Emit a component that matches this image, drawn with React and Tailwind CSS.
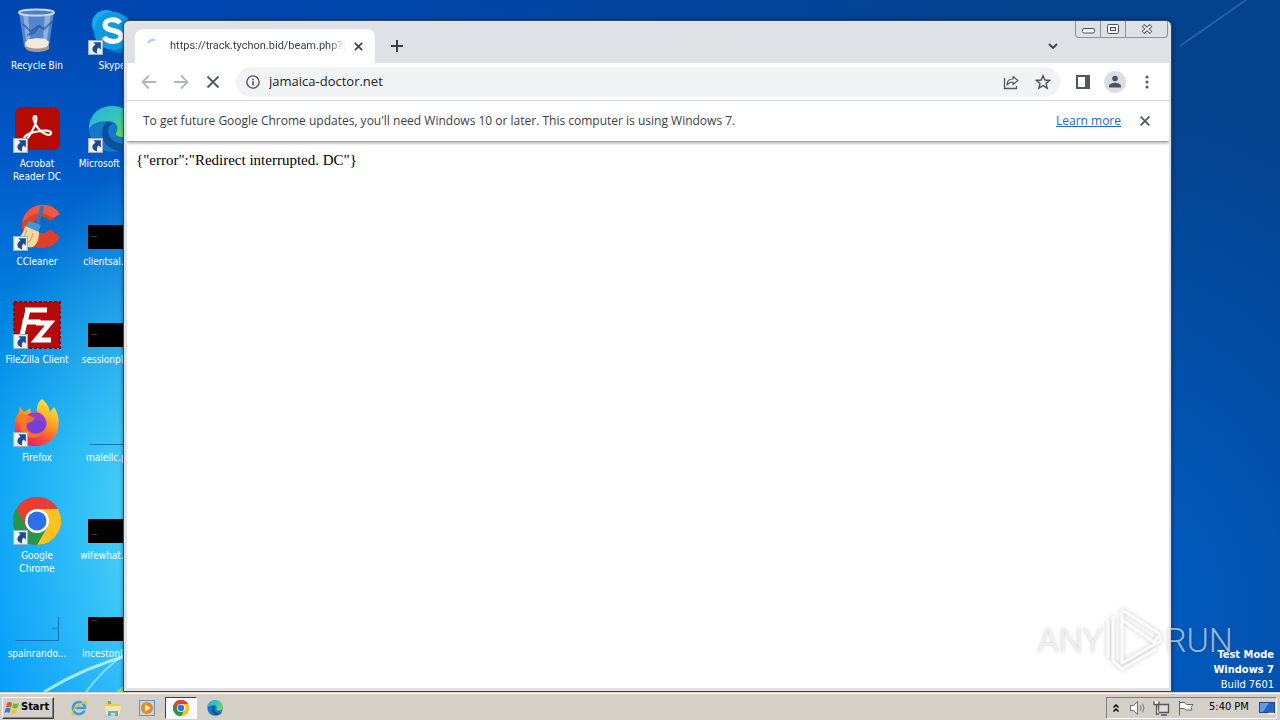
import { useState } from "react";

function ShortcutBadge() {
  return (
    <svg viewBox="0 0 14 14" className="absolute bottom-0 left-0 h-[15px] w-[15px]">
      <rect x="0.5" y="0.5" width="13" height="13" fill="#eef2f6" stroke="#a3b0bd" />
      <path d="M5 2h7v7L10 7C8.500 8 8 10 8.500 12.500 3.500 11.500 2.500 7 7 4.200z" fill="#1c4b8f" />
    </svg>
  );
}

function RecycleIcon() {
  return (
    <svg viewBox="0 0 48 48" className="h-12 w-12">
      <path d="M6 5l5 34c1 5 24 5 25 0l5-34z" fill="#6f99d6" fillOpacity="0.75" />
      <path d="M10 6l3 27h4L15 6zM32 6l-2 27h4L38 6z" fill="#d5e5f7" fillOpacity="0.45" />
      <path d="M10 17l8 8 7-6 6 3 8-7M14 28l7-2 6-8" fill="none" stroke="#1e4c9c" strokeWidth="2" strokeOpacity="0.6" />
      <path d="M12 36c3-6 7-3 11-5 5 1 9-1 13 4l-1 4c-3 5-21 5-23 0z" fill="#f0e9dc" />
      <path d="M12 37c1 6 23 6 24 0v5c-4 4-20 4-23 0z" fill="#a3978c" />
      <ellipse cx="23.500" cy="5.500" rx="17.500" ry="3" fill="#4e7fc4" stroke="#cdd8e2" strokeWidth="2" />
    </svg>
  );
}

function SkypeIcon() {
  return (
    <svg viewBox="0 0 48 48" className="h-12 w-12">
      <circle cx="18" cy="17" r="14" fill="#20a8e8" />
      <circle cx="31" cy="31" r="15" fill="#0a78c8" />
      <circle cx="25" cy="24" r="19" fill="#0d9ae0" />
      <path d="M32 16c-4-5-15-4-15 2 0 7 16 4 16 11 0 7-13 7-17 1" fill="none" stroke="#fff" strokeWidth="5" />
    </svg>
  );
}

function AcrobatIcon() {
  return (
    <svg viewBox="0 0 48 48" className="h-12 w-12">
      <rect x="2" y="2" width="45" height="43" rx="7" fill="#b30b00" />
      <path
        d="M13 34c-4 0-1-5 9-7 8-2 16-2 16 1 0 4-9 1-13-5-4-5-6-12-3-12s1 9-3 15c-2 4-4 8-6 8z"
        fill="none"
        stroke="#fff"
        strokeWidth="2.200"
      />
    </svg>
  );
}

function EdgeIcon({ className }) {
  return (
    <svg viewBox="0 0 48 48" className={className}>
      <defs>
        <linearGradient id="edgeTop" x1="0" y1="0" x2="1" y2="0.600">
          <stop offset="0" stopColor="#2faee0" />
          <stop offset="0.600" stopColor="#33c6b8" />
          <stop offset="1" stopColor="#6fdc4c" />
        </linearGradient>
      </defs>
      <circle cx="24" cy="24" r="23" fill="#1478c8" />
      <path d="M1 24C1 10 11 1 24 1c14 0 23 10 23 19 0 8-6 12-12 12-5 0-8-2-7-4 4-6 0-12-8-12C10 16 3 19 1 24z" fill="url(#edgeTop)" />
      <path d="M19 17c-9 7-6 26 12 29 6-1 11-5 14-9-12 5-25-1-25-11 0-4 2-6 4-7-1-2-3-2-5-2z" fill="#0c4f9c" />
    </svg>
  );
}

function CCleanerIcon() {
  return (
    <svg viewBox="0 0 48 48" className="h-12 w-12">
      <path d="M47 11C38-4 12-1 9 20c-2 26 27 34 38 14l-10-8c-6 8-17 4-16-5 1-8 11-10 16-3z" fill="#df3f2b" />
      <path d="M47 11C38-4 12-1 9 20c10-11 20-13 31-5z" fill="#f0654a" fillOpacity="0.7" />
      <path d="M29 5l-5 17" stroke="#2e78b8" strokeWidth="4" strokeLinecap="round" />
      <path d="M16 18l12 4-3 8-13-6z" fill="#3f97d8" />
      <path d="M12 23l14 6c0 8-2 12-6 15-8 1-15-2-20-7 7-2 11-7 12-14z" fill="#f3d9a0" />
      <path d="M14 27c-2 6-5 9-9 11M20 30c-1 6-4 9-7 12" stroke="#c79f5c" fill="none" />
    </svg>
  );
}

function FileZillaIcon() {
  return (
    <svg viewBox="0 0 48 48" className="h-12 w-12">
      <rect x="1" y="1" width="46" height="46" fill="#b50a0a" />
      <rect x="1" y="1" width="46" height="46" fill="none" stroke="#8d0505" strokeWidth="2" strokeDasharray="3 2" />
      <path d="M12 9h22M9.500 21h18M15 9L9 34" stroke="#fff" strokeWidth="5" fill="none" />
      <path d="M23 22h14L23 39h15" stroke="#fff" strokeWidth="5" fill="none" />
    </svg>
  );
}

function FirefoxIcon() {
  return (
    <svg viewBox="0 0 48 48" className="h-12 w-12">
      <defs>
        <linearGradient id="fox" x1="0.800" y1="0" x2="0.300" y2="1">
          <stop offset="0" stopColor="#fff04a" />
          <stop offset="0.450" stopColor="#ff9a1f" />
          <stop offset="0.750" stopColor="#ff4a3d" />
          <stop offset="1" stopColor="#e21a72" />
        </linearGradient>
      </defs>
      <path
        d="M29 0c5 4 7 8 8 13l4-5c5 7 6 17 3 25-7 17-31 19-40 4C0 30 1 19 6 13l1-5 4 5c2-1 4-2 6-4l1 5c2-1 4-1 6-1-1-5 1-10 5-13z"
        fill="url(#fox)"
      />
      <circle cx="23" cy="25" r="10" fill="#7440d8" />
      <path d="M14 16c6-4 14-4 18 3 2 4 2 6 1 9-2-4-5-6-9-6z" fill="#8d3fd6" />
      <path d="M5 17c5-3 10-1 17 2-1 4-6 4-8 6-3 7 6 13 15 8-5 10-24 8-24-16z" fill="#ff7a24" fillOpacity="0.8" />
    </svg>
  );
}

function ChromeIcon({ className }) {
  return (
    <svg viewBox="0 0 48 48" className={className}>
      <circle cx="24" cy="24" r="24" fill="#2b9547" />
      <path d="M24 24L3.200 12A24 24 0 0 1 44.800 12z" fill="#e63e32" />
      <path d="M24 12h20.800A24 24 0 0 1 24 48l10.400-18z" fill="#fcc220" />
      <path d="M3.200 12L13.600 30 24 24V12z" fill="#e63e32" />
      <path d="M3.200 12l10.400 18L24 36h6L24 48A24 24 0 0 1 3.200 12z" fill="#2b9547" />
      <circle cx="24" cy="24" r="12" fill="#fff" />
      <circle cx="24" cy="24" r="9.500" fill="#2f6fea" />
    </svg>
  );
}

function FileThumb({ dash }) {
  return (
    <span className="flex h-12 w-12 items-end pb-[2px]">
      <span className={`flex h-6 w-full bg-black pl-[3px] ${dash}`}>
        <span className="h-px w-[6px] bg-[#2c3f3d]" />
      </span>
    </span>
  );
}

function LineThumb() {
  return (
    <span className="flex h-12 w-12 items-end pb-[2px] pl-[2px]">
      <span className="h-px w-full bg-[#12779f]" />
    </span>
  );
}

function OutlineThumb() {
  return (
    <span className="flex h-12 w-12 items-end px-[2px] pb-[2px]">
      <span className="flex h-6 w-full items-center justify-end border-r border-b border-[#1272b4]">
        <span className="h-px w-[6px] bg-[#1272b4]" />
      </span>
    </span>
  );
}

const columns = [
  [
    { label: "Recycle Bin", icon: <RecycleIcon /> },
    { label: "Acrobat Reader DC", icon: <AcrobatIcon />, shortcut: true, wrap: true },
    { label: "CCleaner", icon: <CCleanerIcon />, shortcut: true },
    { label: "FileZilla Client", icon: <FileZillaIcon />, shortcut: true },
    { label: "Firefox", icon: <FirefoxIcon />, shortcut: true },
    { label: "Google Chrome", icon: <ChromeIcon className="h-12 w-12" />, shortcut: true, wrap: true },
    { label: "spainrando...", icon: <OutlineThumb /> },
  ],
  [
    { label: "Skype", icon: <SkypeIcon />, shortcut: true },
    { label: "Microsoft Edge", icon: <EdgeIcon className="h-12 w-12" />, shortcut: true },
    { label: "clientsal.png", icon: <FileThumb dash="pt-[11px]" /> },
    { label: "sessionplus...", icon: <FileThumb dash="pt-[11px]" /> },
    { label: "malellc.png", icon: <LineThumb /> },
    { label: "wifewhat.pn...", icon: <FileThumb dash="pt-[15px]" /> },
    { label: "incestonlkg...", icon: <FileThumb dash="pt-[3px]" /> },
  ],
];

function DesktopIcons() {
  return (
    <div className="flex gap-px">
      {columns.map((items, i) => (
        <div key={i} className="flex flex-col">
          {items.map((item) => (
            <button key={item.label} type="button" className="flex h-[98px] w-[74px] flex-col items-center gap-1 pt-[7px]">
              <span className="relative block h-12 w-12">
                {item.icon}
                {item.shortcut && <ShortcutBadge />}
              </span>
              <span
                className={
                  item.wrap
                    ? "px-2 text-center text-[10px] leading-[13px] text-white"
                    : "text-center text-[10px] leading-[13px] whitespace-nowrap text-white"
                }
              >
                {item.label}
              </span>
            </button>
          ))}
        </div>
      ))}
    </div>
  );
}

function Wallpaper() {
  return (
    <svg viewBox="0 0 1280 692" preserveAspectRatio="none" className="absolute inset-0 h-full w-full">
      <path d="M44 692C70 676 96 664 130 655" fill="none" stroke="#c8f4ff" strokeWidth="3" strokeOpacity="0.8" />
      <path d="M86 692C96 678 110 664 130 650" fill="none" stroke="#c8f4ff" strokeWidth="2" strokeOpacity="0.6" />
      <path d="M116 692l14-12v12z" fill="#7fe08a" />
      <path d="M1180 46L1246 0" stroke="#5c8cc4" strokeWidth="2" strokeOpacity="0.4" />
    </svg>
  );
}

function TitleBar() {
  return (
    <div className="flex h-[42px] items-start">
      <div className="mt-2 ml-2 flex h-[34px] w-60 items-center rounded-t-lg bg-white pl-[10px]">
        <svg viewBox="0 0 16 16" className="h-4 w-4 shrink-0">
          <path d="M3 5a7 7 0 0 1 7-3" fill="none" stroke="#a8c7fa" strokeWidth="2" />
        </svg>
        <span className="ml-[9px] w-[176px] overflow-hidden font-['Roboto',sans-serif] text-[11px] whitespace-nowrap text-[#3c4043] [mask-image:linear-gradient(to_right,#000_90%,transparent)]">
          https://track.tychon.bid/beam.php?t
        </span>
        <button type="button" aria-label="Close tab" className="ml-1 flex h-4 w-4 items-center justify-center">
          <svg viewBox="0 0 10 10" className="h-[9px] w-[9px]">
            <path d="M1 1l8 8M9 1L1 9" stroke="#3c4043" strokeWidth="1.800" />
          </svg>
        </button>
      </div>
      <button type="button" aria-label="New tab" className="mt-[9px] ml-[6px] flex h-8 w-8 items-center justify-center">
        <svg viewBox="0 0 12 12" className="h-3 w-3">
          <path d="M6 0v12M0 6h12" stroke="#3c4043" strokeWidth="2" />
        </svg>
      </button>
      <button type="button" aria-label="Search tabs" className="mt-[9px] ml-auto flex h-8 w-8 items-center justify-center">
        <svg viewBox="0 0 10 6" className="h-[6px] w-[10px]">
          <path d="M1 1l4 4 4-4" fill="none" stroke="#3c4043" strokeWidth="1.800" />
        </svg>
      </button>
      <div className="mr-px ml-[6px] flex h-[17px] rounded-b-sm border border-t-0 border-[#8f949b]">
        <button type="button" aria-label="Minimize" className="flex w-[25px] items-center justify-center border-r border-[#8f949b] pt-1">
          <svg viewBox="0 0 13 6" className="h-[6px] w-[13px]">
            <rect x="0.500" y="0.500" width="12" height="4.500" rx="1.500" fill="#fff" stroke="#4c5260" />
          </svg>
        </button>
        <button type="button" aria-label="Restore" className="flex w-[25px] items-center justify-center border-r border-[#8f949b]">
          <svg viewBox="0 0 12 10" className="h-[10px] w-3">
            <rect x="0.500" y="0.500" width="11" height="9" rx="1" fill="#fff" stroke="#4c5260" />
            <rect x="3.500" y="3.500" width="5" height="3" fill="#dee1e6" stroke="#4c5260" />
          </svg>
        </button>
        <button type="button" aria-label="Close" className="flex w-[41px] items-center justify-center">
          <svg viewBox="0 0 13 11" className="h-[10px] w-3">
            <path d="M2 1.500l9 8M11 1.500l-9 8" stroke="#4c5260" strokeWidth="4" />
            <path d="M2.500 2l8 7M10.500 2l-8 7" stroke="#fff" strokeWidth="2" />
          </svg>
        </button>
      </div>
    </div>
  );
}

function Toolbar() {
  const [url, setUrl] = useState("jamaica-doctor.net");

  return (
    <div className="flex h-[38px] items-center border-b border-[#d5d8dc] bg-white px-[6px]">
      <button type="button" aria-label="Back" className="flex h-8 w-8 items-center justify-center">
        <svg viewBox="0 0 16 16" className="h-4 w-4">
          <path d="M15 8H2M8 1.500L1.500 8 8 14.500" fill="none" stroke="#b4b7ba" strokeWidth="1.800" />
        </svg>
      </button>
      <button type="button" aria-label="Forward" className="flex h-8 w-8 items-center justify-center">
        <svg viewBox="0 0 16 16" className="h-4 w-4">
          <path d="M1 8h13M8 1.500L14.500 8 8 14.500" fill="none" stroke="#b4b7ba" strokeWidth="1.800" />
        </svg>
      </button>
      <button type="button" aria-label="Stop" className="flex h-8 w-8 items-center justify-center">
        <svg viewBox="0 0 14 14" className="h-[14px] w-[14px]">
          <path d="M1.500 1.500l11 11M12.500 1.500l-11 11" stroke="#54585d" strokeWidth="1.800" />
        </svg>
      </button>

      <div className="mx-[7px] flex h-[30px] min-w-0 flex-1 items-center rounded-full bg-[#f1f3f4] px-px">
        <button type="button" aria-label="Site information" className="flex h-8 w-8 items-center justify-center">
          <svg viewBox="0 0 16 16" className="h-[14px] w-[14px]">
            <circle cx="8" cy="8" r="7" fill="none" stroke="#54585d" strokeWidth="1.600" />
            <path d="M8 7v5M8 4v2" stroke="#54585d" strokeWidth="1.800" />
          </svg>
        </button>
        <input
          type="text"
          aria-label="Address"
          className="min-w-0 flex-1 bg-transparent text-[13px] text-[#202124] outline-none"
          value={url}
          onChange={(e) => setUrl(e.target.value)}
        />
        <button type="button" aria-label="Share" className="flex h-8 w-8 items-center justify-center">
          <svg viewBox="0 0 16 16" className="h-4 w-4">
            <path d="M1.500 4v10.500h12V12" fill="none" stroke="#54585d" strokeWidth="1.300" />
            <path d="M4 11c0-4 2-6 6-6V2.500L15 6.500l-5 4V8c-3 0-4.500 1-6 3z" fill="none" stroke="#54585d" strokeWidth="1.200" strokeLinejoin="round" />
          </svg>
        </button>
        <button type="button" aria-label="Bookmark" className="flex h-8 w-8 items-center justify-center">
          <svg viewBox="0 0 16 16" className="h-4 w-4">
            <path
              d="M8 1.700l1.900 4.300 4.700.4-3.600 3.100 1.100 4.600L8 11.700l-4.100 2.400L5 9.500 1.400 6.400l4.700-.4z"
              fill="none"
              stroke="#54585d"
              strokeWidth="1.500"
            />
          </svg>
        </button>
      </div>

      <button type="button" aria-label="Side panel" className="flex h-8 w-8 items-center justify-center">
        <svg viewBox="0 0 14 14" className="h-[14px] w-[14px]">
          <rect x="1" y="1" width="12" height="12" fill="none" stroke="#54585d" strokeWidth="2" />
          <path d="M9 1h4v12H9z" fill="#54585d" />
        </svg>
      </button>
      <button type="button" aria-label="Profile" className="flex h-8 w-8 items-center justify-center">
        <svg viewBox="0 0 22 22" className="h-[22px] w-[22px]">
          <circle cx="11" cy="11" r="11" fill="#dadde3" />
          <circle cx="11" cy="7.500" r="2.800" fill="#4d5461" />
          <path d="M5 16.500V15c0-2 4-3.200 6-3.200s6 1.200 6 3.200v1.500z" fill="#4d5461" />
        </svg>
      </button>
      <button type="button" aria-label="Menu" className="flex h-8 w-8 items-center justify-center">
        <svg viewBox="0 0 4 14" className="h-[14px] w-1">
          <circle cx="2" cy="2" r="1.500" fill="#54585d" />
          <circle cx="2" cy="7" r="1.500" fill="#54585d" />
          <circle cx="2" cy="12" r="1.500" fill="#54585d" />
        </svg>
      </button>
    </div>
  );
}

function BrowserWindow() {
  return (
    <div className="absolute top-5 right-[108px] bottom-0 left-[123px] flex flex-col rounded-t-md border border-[#34465c] bg-[#dee1e6] pr-[2px] pb-[3px] pl-[3px] shadow-[0_0_4px_rgba(0,0,0,0.4)]">
      <TitleBar />
      <Toolbar />
      <div className="relative flex h-[41px] items-center border-b border-[#a2a4a6] bg-white pr-2 pl-4 text-xs text-[#3c4043] shadow-[0_1px_3px_rgba(0,0,0,0.35)] [clip-path:inset(0_0_-6px_0)]">
        <p className="flex-1">
          To get future Google Chrome updates, you'll need Windows 10 or later. This computer is using Windows 7.
        </p>
        <a href="#learn" className="mr-2 text-[#1967d2] underline">
          Learn more
        </a>
        <button type="button" aria-label="Dismiss" className="flex h-8 w-8 items-center justify-center">
          <svg viewBox="0 0 10 10" className="h-[10px] w-[10px]">
            <path d="M0.700 0.700l8.600 8.600M9.300 0.700L0.700 9.300" stroke="#54585d" strokeWidth="1.800" />
          </svg>
        </button>
      </div>
      <main className="flex-1 bg-white px-[9px] py-[9px] font-['Liberation_Serif',serif] text-[15px] leading-[18px] text-black">
        {'{"error":"Redirect interrupted. DC"}'}
      </main>
    </div>
  );
}

function Watermark() {
  return (
    <div className="pointer-events-none absolute right-[47px] bottom-[19px] flex items-center gap-[2px] font-['Roboto',sans-serif] text-[34px] leading-none font-light text-white/60 [text-shadow:0_0_3px_rgba(0,0,0,0.25)]">
      <span>ANY</span>
      <svg viewBox="0 0 58 66" className="h-[66px] w-[58px] drop-shadow-[0_0_2px_rgba(0,0,0,0.25)]">
        <g fill="none" stroke="#ffffff" strokeOpacity="0.85" strokeWidth="3" strokeLinejoin="round">
          <path d="M17 3l38 24-6 8L17 13z" />
          <path d="M17 13v43l38-22v-7" />
          <path d="M8 9v45M3 13v38" />
          <path d="M8 54l9 8 34-20" />
        </g>
      </svg>
      <span>RUN</span>
    </div>
  );
}

function TaskButton({ label, active, children }) {
  return (
    <button
      type="button"
      aria-label={label}
      className={
        active
          ? "flex h-[22px] w-8 items-center justify-center border border-t-[#404040] border-r-white border-b-white border-l-[#404040] bg-[#fafafa]"
          : "flex h-[22px] w-8 items-center justify-center"
      }
    >
      {children}
    </button>
  );
}

function Taskbar() {
  return (
    <footer className="flex h-7 items-center gap-[2px] border-t border-[#d4d0c8] bg-[#d4d0c8] pt-[2px] pr-[3px] pl-[2px] font-['DejaVu_Sans_Condensed','DejaVu_Sans',sans-serif] text-[11px] text-black shadow-[inset_0_1px_0_#fff]">
      <button
        type="button"
        className="flex h-[22px] w-[52px] items-center gap-px border border-t-white border-r-[#404040] border-b-[#404040] border-l-white pl-px font-bold shadow-[inset_-1px_-1px_0_#808080]"
      >
        <svg viewBox="0 0 16 16" className="h-4 w-4 shrink-0">
          <path d="M3 3c2-1.500 4-1 5 0L7 7.500c-1.500-1-3-1-5 0z" fill="#e8552a" />
          <path d="M9 3.300c2 1 4 .7 6-.3l-1.500 4.700c-2 1-3.500 1-5.300 0z" fill="#6fb82e" />
          <path d="M1.700 8.500c2-1 3.500-1 5 0L5.400 13c-1.500-1-3-1-5 0z" fill="#2f7fd8" />
          <path d="M8 9c2 1 3.500.8 5.200 0L12 13.600c-2 1-3.700.8-5.300-.2z" fill="#f6c02c" />
        </svg>
        Start
      </button>
      <nav className="ml-[7px] flex gap-[2px]">
        <TaskButton label="Internet Explorer">
          <svg viewBox="0 0 18 18" className="h-[18px] w-[18px]">
            <path d="M14.500 11.500A6 6 0 1 1 15 9H5.500" fill="none" stroke="#3aa0dc" strokeWidth="2.600" />
            <path d="M2 16C0 13 6 4 16 2c2 0 1 3 0 4 0-4-9 0-13 7-1 2 1 3 3 2-2 2-3 2-4 1z" fill="#e6bd3a" />
          </svg>
        </TaskButton>
        <TaskButton label="File Explorer">
          <svg viewBox="0 0 18 18" className="h-[18px] w-[18px]">
            <path d="M2 3h6l1 2h7v10H2z" fill="#e9ca6b" />
            <path d="M4 2h3v3H4z" fill="#6bb35a" />
            <path d="M1 7h16l-1 8H2z" fill="#f8e6a4" />
            <path d="M4 17v-5h10v5h-3v-3H7v3z" fill="#5aaede" />
          </svg>
        </TaskButton>
        <TaskButton label="Media Player">
          <svg viewBox="0 0 18 18" className="h-[18px] w-[18px]">
            <rect x="1.500" y="1.500" width="15" height="15" fill="#bcd8ee" stroke="#5f97c6" />
            <circle cx="9" cy="9" r="6" fill="#f28418" />
            <path d="M7 5.500v7L12.500 9z" fill="#fff" />
          </svg>
        </TaskButton>
        <TaskButton label="Google Chrome" active>
          <ChromeIcon className="h-4 w-4" />
        </TaskButton>
        <TaskButton label="Microsoft Edge">
          <EdgeIcon className="h-4 w-4" />
        </TaskButton>
      </nav>
      <div className="ml-auto flex h-[22px] w-[171px] items-center border border-t-[#808080] border-r-white border-b-white border-l-[#808080] pl-[5px]">
        <button type="button" aria-label="Show hidden icons">
          <svg viewBox="0 0 8 10" className="h-[10px] w-2">
            <path d="M1.500 4.500L4 2l2.500 2.500M1.500 8.500L4 6l2.500 2.500" fill="none" stroke="#000" strokeWidth="1.500" />
          </svg>
        </button>
        <svg viewBox="0 0 18 16" className="ml-[9px] h-4 w-[18px]">
          <path d="M1.500 5.500h3l4-4v13l-4-4h-3z" fill="#fff" stroke="#6a6a6a" />
          <path d="M11 5q2 3 0 6M13.500 3.500q3 4.500 0 9" fill="none" stroke="#777" />
        </svg>
        <svg viewBox="0 0 18 16" className="ml-[6px] h-4 w-[18px]">
          <path d="M5.500 4.500h10v8h-10zM8 15h6" fill="#ddd" stroke="#555" strokeWidth="1.300" />
          <path d="M1 1.500v3h5v-3M3.500 4.500V14H6" fill="#fff" stroke="#555" strokeWidth="1.300" />
        </svg>
        <svg viewBox="0 0 18 16" className="ml-[6px] h-4 w-[18px]">
          <path d="M2.500 1v14.500M3 2.500h5l1.500 2H16l-2 3 1 2.500H9l-1.500-1.500H3" fill="#fff" stroke="#666" />
        </svg>
        <time className="ml-[14px] whitespace-nowrap">5:40 PM</time>
        <button type="button" aria-label="Show desktop" className="mr-px ml-auto">
          <svg viewBox="0 0 16 14" className="h-[14px] w-4">
            <rect x="0.500" y="1.500" width="15" height="10" fill="#1d62c4" stroke="#26497c" />
            <path d="M1 2h9L4 11H1z" fill="#5d9ae6" />
            <path d="M9 12.500h6" stroke="#fff" strokeWidth="1.500" />
          </svg>
        </button>
      </div>
    </footer>
  );
}

export default function App() {
  return (
    <div className="flex min-h-screen flex-col font-['Open_Sans',sans-serif]">
      <div className="relative flex-1 overflow-hidden bg-[radial-gradient(420px_520px_at_1100px_620px,rgba(0,98,206,0.9),rgba(0,80,180,0)),linear-gradient(to_right,rgba(4,66,142,0)_15%,#04428e_80%),radial-gradient(240px_380px_at_200px_530px,rgba(110,236,250,0.9),rgba(80,210,245,0)),linear-gradient(to_bottom,#0045b0_0%,#0058c6_22%,#0084e2_46%,#009cf2_66%,#0098fa_100%)]">
        <Wallpaper />
        <div className="relative font-['DejaVu_Sans_Condensed','DejaVu_Sans',sans-serif]">
          <DesktopIcons />
        </div>
        <BrowserWindow />
        <Watermark />
        <div className="absolute right-[6px] bottom-0 text-right font-['DejaVu_Sans_Condensed','DejaVu_Sans',sans-serif] text-[11px] leading-[15px] text-white">
          <p className="font-bold">Test Mode</p>
          <p className="font-bold">Windows 7</p>
          <p>Build 7601</p>
        </div>
      </div>
      <Taskbar />
    </div>
  );
}
